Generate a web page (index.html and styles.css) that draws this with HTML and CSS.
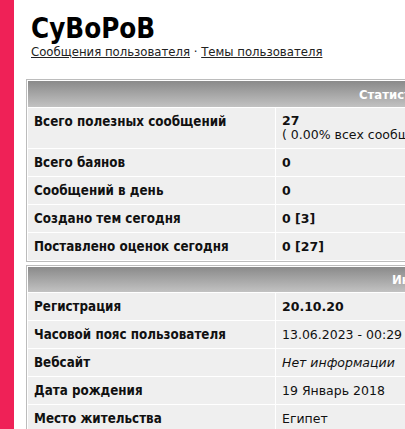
FILE: index.html
```html
<!DOCTYPE html>
<html lang="ru">
<head>
<meta charset="utf-8">
<link rel="stylesheet" href="styles.css">
</head>
<body>
<div class="page">
  <div class="side"></div>
  <div class="main">
    <h1 class="title">CyBoPoB</h1>
    <div class="links"><a href="#">Сообщения пользователя</a> · <a href="#">Темы пользователя</a></div>

    <table class="box box-stats">
      <tr><th colspan="2" class="head head-stats">Статистика</th></tr>
      <tr class="tall">
        <td class="lbl">Всего полезных сообщений</td>
        <td class="val"><b>27</b><br>( 0.00% всех сообщений )</td>
      </tr>
      <tr><td class="lbl">Всего баянов</td><td class="val"><b>0</b></td></tr>
      <tr><td class="lbl">Сообщений в день</td><td class="val"><b>0</b></td></tr>
      <tr><td class="lbl">Создано тем сегодня</td><td class="val"><b>0 [3]</b></td></tr>
      <tr><td class="lbl">Поставлено оценок сегодня</td><td class="val"><b>0 [27]</b></td></tr>
    </table>

    <table class="box box-info">
      <tr><th colspan="2" class="head head-info">Информация</th></tr>
      <tr><td class="lbl">Регистрация</td><td class="val"><b>20.10.20</b></td></tr>
      <tr><td class="lbl">Часовой пояс пользователя</td><td class="val">13.06.2023 - 00:29</td></tr>
      <tr><td class="lbl">Вебсайт</td><td class="val"><i>Нет информации</i></td></tr>
      <tr><td class="lbl">Дата рождения</td><td class="val">19 Январь 2018</td></tr>
      <tr><td class="lbl">Место жительства</td><td class="val">Египет</td></tr>
    </table>
  </div>
</div>
</body>
</html>
```
FILE: styles.css
```css
html, body {
  margin: 0;
  padding: 0;
  overflow: hidden;
  background: #ffffff;
}
body {
  font-family: "DejaVu Sans Condensed", "DejaVu Sans", Verdana, sans-serif;
  font-size: 13px;
  color: #111111;
}
.page {
  display: flex;
  min-height: 429px;
}
.side {
  width: 14px;
  flex: none;
  background: #ef2157;
}
.main {
  padding-left: 12px;
  flex: none;
}
.title {
  margin: 14px 0 0 5px;
  font-size: 27.5px;
  line-height: 28px;
  font-weight: bold;
  color: #000000;
}
.links {
  margin: 2px 0 0 5px;
  line-height: 15px;
  color: #222222;
}
.links a {
  color: #222222;
  text-decoration: underline;
}
.box {
  width: 760px;
  border: 1px solid #bcbcbc;
  border-spacing: 1px;
  background: #ffffff;
  margin-top: 20px;
}
.box-info {
  margin-top: 3px;
}
.head {
  height: 26px;
  padding: 0;
  text-align: left;
  color: #ffffff;
  font-weight: bold;
  background: linear-gradient(#8a8a8a, #c2c2c2);
  box-sizing: border-box;
}
.head-stats {
  padding-left: 331px;
}
.head-info {
  padding-left: 364px;
  height: 25px;
}
.lbl, .val {
  background: #efefef;
  padding: 6px 6px;
  line-height: 15px;
  vertical-align: top;
  white-space: nowrap;
}
.lbl {
  width: 235px;
  font-weight: bold;
  font-size: 13.3px;
}
.val {
  padding-left: 6px;
  font-family: "DejaVu Sans", Verdana, sans-serif;
  font-size: 12.5px;
}
.tall .val {
  line-height: 14px;
}
.val i {
  font-style: italic;
}
```
